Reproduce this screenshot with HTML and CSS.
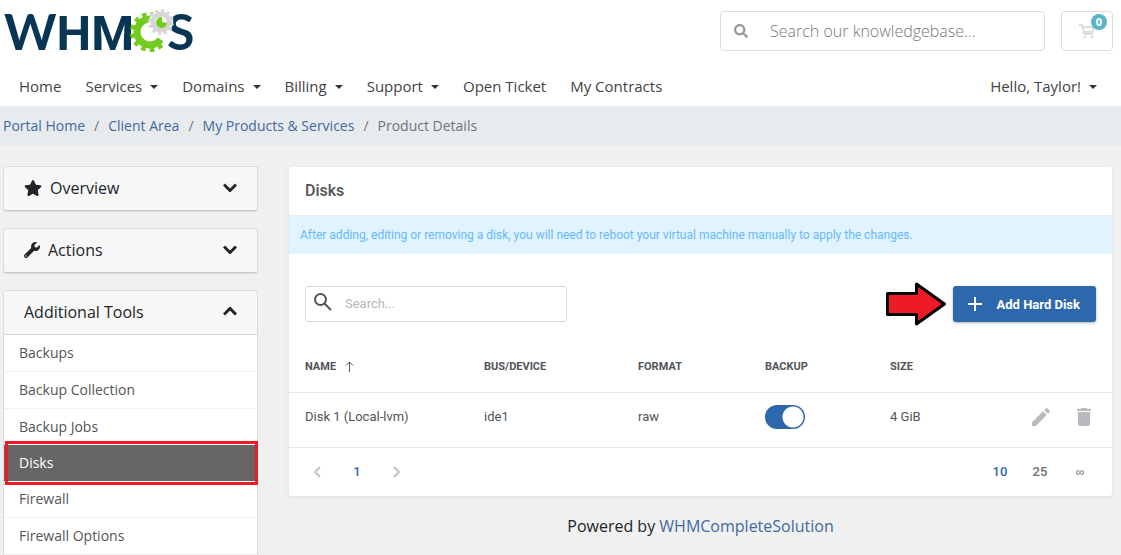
FILE: index.html
```html
<!DOCTYPE html>
<html lang="en">
<head>
<meta charset="utf-8">
<meta name="viewport" content="width=device-width, initial-scale=1">
<title>Product Details - WHMCS</title>
<link rel="stylesheet" href="styles.css">
</head>
<body>
<header class="header">
  <div class="topbar">
    <a class="logo" href="#" aria-label="WHMCS">
      <svg width="196" height="62" viewBox="0 0 196 62">
        <text class="logo-text" x="4" y="50">W<tspan class="logo-hm">HM</tspan></text>
        <text class="logo-text" x="167" y="50">S</text>
        <circle cx="150" cy="32" r="13" fill="none" stroke="#72cc20" stroke-width="7" pathLength="360" stroke-dasharray="265 95" transform="rotate(35 150 32)"/>
        <circle cx="150" cy="32" r="17" fill="none" stroke="#72cc20" stroke-width="6" pathLength="360" stroke-dasharray="15 13 15 13 15 13 15 13 15 13 15 13 15 13 15 13 15 121" transform="rotate(48 150 32)"/>
        <circle cx="161" cy="22" r="12" fill="#fff"/>
        <circle cx="161" cy="22" r="8" fill="none" stroke="#d6d6d6" stroke-width="5"/>
        <circle cx="161" cy="22" r="11" fill="none" stroke="#d6d6d6" stroke-width="4" stroke-dasharray="3 2.760" pathLength="69.120"/>
        <path d="M162 17a5.500 5.500 0 1 0 5 6l-5-1z" fill="#72cc20"/>
      </svg>
    </a>
    <form class="kb-search">
      <svg width="14" height="14" viewBox="0 0 512 512" fill="#999"><path d="M505 442.700 405.300 343c-4.500-4.500-10.600-7-17-7H372c27.600-35.300 44-79.700 44-128C416 93.100 322.900 0 208 0S0 93.100 0 208s93.100 208 208 208c48.300 0 92.700-16.400 128-44v16.300c0 6.400 2.500 12.500 7 17l99.700 99.700c9.400 9.400 24.600 9.400 33.900 0l28.300-28.300c9.400-9.400 9.400-24.600.1-34zM208 336c-70.700 0-128-57.200-128-128 0-70.700 57.200-128 128-128 70.700 0 128 57.200 128 128 0 70.700-57.200 128-128 128z"/></svg>
      <input type="text" aria-label="Search our knowledgebase" placeholder="Search our knowledgebase...">
    </form>
    <a class="cart" href="#" aria-label="Shopping cart">
      <svg width="16" height="15" viewBox="0 0 16 15" fill="none" stroke="#ddd" stroke-width="2"><path d="M0 1h3l2 9h9M4 3h11l-2 5H5"/><circle cx="6" cy="13" r="1.500" fill="#ddd" stroke="none"/><circle cx="13" cy="13" r="1.500" fill="#ddd" stroke="none"/></svg>
      <span class="badge">0</span>
    </a>
  </div>
  <nav class="nav">
    <a href="#">Home</a>
    <a class="drop" href="#">Services</a>
    <a class="drop" href="#">Domains</a>
    <a class="drop" href="#">Billing</a>
    <a class="drop" href="#">Support</a>
    <a href="#">Open Ticket</a>
    <a href="#">My Contracts</a>
    <a class="drop account" href="#">Hello, Taylor!</a>
  </nav>
</header>
<nav class="breadcrumb" aria-label="Breadcrumb">
  <a href="#">Portal Home</a><span>/</span><a href="#">Client Area</a><span>/</span><a href="#">My Products &amp; Services</a><span>/</span><span>Product Details</span>
</nav>
<div class="layout">
  <aside class="sidebar">
    <section class="card">
      <button class="card-head" type="button">
        <svg width="18" height="16" viewBox="0 0 576 512" fill="#212529"><path d="M259.300 17.800 194 150.200 47.900 171.500c-26.200 3.800-36.700 36.100-17.700 54.600l105.700 103-25 145.500c-4.500 26.300 23.200 46 46.400 33.700L288 439.600l130.700 68.700c23.200 12.200 50.900-7.400 46.400-33.700l-25-145.500 105.700-103c19-18.500 8.500-50.800-17.700-54.600L382 150.200 316.700 17.800c-11.700-23.600-45.600-23.900-57.400 0z"/></svg>
        <span>Overview</span>
        <svg class="chev" width="14" height="9" viewBox="0 0 14 9"><path d="M1 1.500l6 6 6-6"/></svg>
      </button>
    </section>
    <section class="card">
      <button class="card-head" type="button">
        <svg width="16" height="16" viewBox="0 0 512 512" fill="#212529"><path d="M507.700 109.100c-2.200-9-13.500-12.100-20.100-5.500l-74.400 74.400-67.900-11.300L334 98.900l74.400-74.400c6.600-6.600 3.400-17.900-5.700-20.200-47.400-11.700-99.600.9-136.600 37.900-39.600 39.600-50.500 97.100-34.100 147.200L18.700 402.800c-25 25-25 65.500 0 90.500s65.500 25 90.500 0l213.200-213.200c50.100 16.700 107.500 5.700 147.400-34.200 37.100-37.100 49.700-89.300 37.900-136.800zM64 472c-13.200 0-24-10.800-24-24 0-13.300 10.700-24 24-24s24 10.700 24 24c0 13.200-10.700 24-24 24z"/></svg>
        <span>Actions</span>
        <svg class="chev" width="14" height="9" viewBox="0 0 14 9"><path d="M1 1.500l6 6 6-6"/></svg>
      </button>
    </section>
    <section class="card open">
      <button class="card-head" type="button">
        <span>Additional Tools</span>
        <svg class="chev" width="14" height="9" viewBox="0 0 14 9"><path d="M1 7.500l6-6 6 6"/></svg>
      </button>
      <div class="menu">
        <a href="#">Backups</a>
        <a href="#">Backup Collection</a>
        <a class="last" href="#">Backup Jobs</a>
        <a class="active" href="#">Disks</a>
        <a href="#">Firewall</a>
        <a href="#">Firewall Options</a>
      </div>
    </section>
  </aside>
  <main>
    <section class="panel">
      <h1 class="panel-title">Disks</h1>
      <p class="notice">After adding, editing or removing a disk, you will need to reboot your virtual machine manually to apply the changes.</p>
      <div class="toolbar">
        <div class="search">
          <svg width="18" height="18" viewBox="0 0 18 18" fill="none" stroke="#505459" stroke-width="2"><circle cx="6.500" cy="6.500" r="5.500"/><path d="M10.500 10.500l6.500 6.500"/></svg>
          <input type="text" aria-label="Search disks" placeholder="Search...">
        </div>
        <svg class="arrow" width="62" height="44" viewBox="0 0 62 44"><path d="M2.500 11.500h29V2l28 20-28 20V32.500h-29z" fill="#ed1c24" stroke="#000" stroke-width="3" stroke-linejoin="round"/></svg>
        <button class="add" type="button">
          <svg width="16" height="14" viewBox="0 0 16 14" fill="none" stroke="#fff" stroke-width="2"><path d="M8 0v14M1 7h14"/></svg>
          Add Hard Disk
        </button>
      </div>
      <table class="disks">
        <thead>
          <tr>
            <th class="c-name">Name <svg width="9" height="11" viewBox="0 0 9 11" fill="none" stroke="#505459"><path d="M4.500 11V1M1 4.500L4.500 1 8 4.500"/></svg></th>
            <th class="c-bus">Bus/Device</th>
            <th class="c-format">Format</th>
            <th class="c-backup">Backup</th>
            <th class="c-size">Size</th>
            <th></th>
          </tr>
        </thead>
        <tbody>
          <tr>
            <td>Disk 1 (Local-lvm)</td>
            <td>ide1</td>
            <td>raw</td>
            <td><input class="toggle" type="checkbox" checked aria-label="Backup"></td>
            <td>4 GiB</td>
            <td>
              <div class="actions">
                <button class="icon" type="button" aria-label="Edit"><svg width="24" height="24" viewBox="0 0 24 24" fill="#b9babd"><path d="M3 17.250V21h3.750L17.810 9.940l-3.750-3.750L3 17.250zM20.710 7.040a1 1 0 0 0 0-1.410l-2.340-2.340a1 1 0 0 0-1.410 0l-1.830 1.830 3.750 3.750 1.830-1.830z"/></svg></button>
                <button class="icon" type="button" aria-label="Delete"><svg width="24" height="24" viewBox="0 0 24 24" fill="#b9babd"><path d="M6 19a2 2 0 0 0 2 2h8a2 2 0 0 0 2-2V7H6v12zM19 4h-3.500l-1-1h-5l-1 1H5v2h14V4z"/></svg></button>
              </div>
            </td>
          </tr>
        </tbody>
      </table>
      <div class="pager">
        <button type="button" aria-label="Previous page"><svg width="8" height="12" viewBox="0 0 8 12" fill="none" stroke="#c4c4c6" stroke-width="2"><path d="M7 1L2 6l5 5"/></svg></button>
        <button class="current" type="button">1</button>
        <button type="button" aria-label="Next page"><svg width="8" height="12" viewBox="0 0 8 12" fill="none" stroke="#c4c4c6" stroke-width="2"><path d="M1 1l5 5-5 5"/></svg></button>
        <div class="sizes">
          <button class="current" type="button">10</button>
          <button type="button">25</button>
          <button class="all" type="button">∞</button>
        </div>
      </div>
    </section>
    <p class="powered">Powered by <a href="#">WHMCompleteSolution</a></p>
  </main>
</div>
</body>
</html>
```

FILE: styles.css
```css
* { box-sizing: border-box; }
body { margin: 0; background: #f0f0f0; color: #212529; font-family: "Open Sans", sans-serif; font-size: 16px; }
a { color: #336699; text-decoration: none; }
button, input { font: inherit; }
button { border: 0; padding: 0; background: none; color: inherit; cursor: pointer; }
svg { flex: none; }

.header { background: #fff; }
.topbar { display: flex; align-items: center; padding-right: 8px; height: 62px; }
.logo { margin-right: auto; display: flex; }
.logo-text { font-family: Lato, sans-serif; font-weight: 700; font-size: 50px; fill: #073655; }
.logo-hm { font-family: Roboto, sans-serif; font-size: 49px; }
.kb-search { display: flex; align-items: center; width: 325px; height: 40px; padding: 0 13px; border: 1px solid #ddd; border-radius: 4px; }
.kb-search input { flex: 1; min-width: 0; border: 0; padding: 0 0 0 22px; background: none; font-weight: 300; outline: 0; }
.kb-search input::placeholder { color: #777; }
.cart { position: relative; display: flex; align-items: center; justify-content: center; width: 52px; height: 40px; margin-left: 16px; border: 1px solid #ddd; border-radius: 4px; }
.badge { position: absolute; top: 2px; right: 5px; width: 16px; height: 16px; border-radius: 8px; background: #5bb5c8; color: #fff; font-size: 11px; line-height: 16px; font-weight: 700; text-align: center; }
.nav { display: flex; align-items: center; gap: 24px; height: 44px; padding: 4px 24px 0 19px; font-size: 15px; }
.nav a { color: #444; }
.drop::after { content: ""; display: inline-block; margin-left: 8px; vertical-align: 3px; border: 4px solid transparent; border-top-color: #333; border-bottom: 0; }
.account { margin-left: auto; }

.breadcrumb { display: flex; align-items: center; gap: 9px; height: 40px; padding: 0 3px 2px; background: #e8ebee; font-size: 14px; color: #6c757d; }
.breadcrumb a { color: #416a9e; }

.layout { display: grid; grid-template-columns: 255px minmax(0, 1fr); gap: 31px; padding: 20px 9px 0 3px; }
.sidebar { display: flex; flex-direction: column; gap: 17px; }
.card { border: 1px solid #dcdcdc; border-bottom-color: #c8c8c8; border-radius: 3px; background: #f7f7f7; box-shadow: 0 1px 1px rgba(0, 0, 0, .08); }
.card-head { display: flex; align-items: center; gap: 8px; width: 100%; height: 43px; padding: 0 20px 2px; }
.chev { margin-left: auto; fill: none; stroke: #212529; stroke-width: 3; }
.open { border-bottom: 0; border-radius: 3px 3px 0 0; box-shadow: none; }
.menu { border-top: 1px solid #d4d4d4; background: #fff; font-size: 14px; }
.menu a { display: block; padding: 8px 15px; border-bottom: 1px solid #f0f0f0; line-height: 20px; color: #555; }
.menu .last, .menu .active { border-bottom: 0; }
.menu .active { position: relative; background: #666; color: #fff; font-weight: 500; }
.menu .active::after { content: ""; position: absolute; inset: -4px -1px -4px 1px; border: 3px solid #ed1c24; }

.panel { margin-top: 1px; border-radius: 3px; background: #fff; box-shadow: 0 1px 3px 1px #e4e5ea; font-family: Roboto, sans-serif; font-size: 13px; color: #505459; }
.panel-title { margin: 0; padding: 14px 16px; font-size: 16px; line-height: 20px; font-weight: 500; }
.notice { margin: 0; padding: 10px 11px; border-top: 1px solid #eaeaf0; background: #e1f3ff; color: #65b9fc; font-size: 12px; line-height: 18px; }
.toolbar { display: flex; align-items: center; padding: 28px 16px 0; }
.search { display: flex; align-items: center; gap: 13px; width: 262px; height: 36px; padding: 0 8px; border: 1px solid #d8d8e5; border-radius: 3px; }
.search input { flex: 1; min-width: 0; border: 0; padding: 0 0 2px; background: none; outline: 0; }
.search input::placeholder { color: #b8b8b8; }
.search svg { margin-bottom: 4px; }
.arrow { margin: 0 6px 0 auto; }
.add { display: flex; align-items: center; gap: 14px; height: 36px; padding: 0 16px 0 14px; border-radius: 3px; background: #2d68ac; color: #fff; font-weight: 700; box-shadow: 0 1px 3px rgba(0, 0, 0, .3); }
.disks { width: 100%; margin-top: 16px; border-collapse: collapse; table-layout: fixed; }
.disks th, .disks td { padding: 0 16px; border-bottom: 1px solid #e9eaf1; text-align: left; }
.disks th { height: 50px; font-size: 11px; font-weight: 700; text-transform: uppercase; }
.disks th svg { margin-left: 6px; vertical-align: -2px; }
.disks td { height: 55px; padding-bottom: 6px; }
.c-name { width: 179px; }
.c-bus { width: 154px; }
.c-format { width: 127px; }
.c-backup { width: 125px; }
.c-size { width: 118px; }
.toggle { appearance: none; display: block; width: 40px; height: 24px; margin: 0; border-radius: 12px; background: radial-gradient(circle at 28px 12px, #fff 10px, #2d68ac 11px); }
.actions { display: flex; justify-content: flex-end; gap: 19px; }
.icon { display: flex; }
.pager { display: flex; align-items: center; height: 48px; padding: 0 12px 0 8px; font-weight: 500; color: #6c6f73; }
.pager button { display: flex; align-items: center; justify-content: center; width: 40px; height: 32px; }
.pager .current { color: #2d68ac; }
.sizes { display: flex; margin-left: auto; }
.pager .all { font-family: "Liberation Sans", sans-serif; font-size: 12px; }
.powered { margin: 18px 0 0; text-align: center; line-height: 24px; font-size: 16px; }
.powered a { color: #416a9e; }
```
